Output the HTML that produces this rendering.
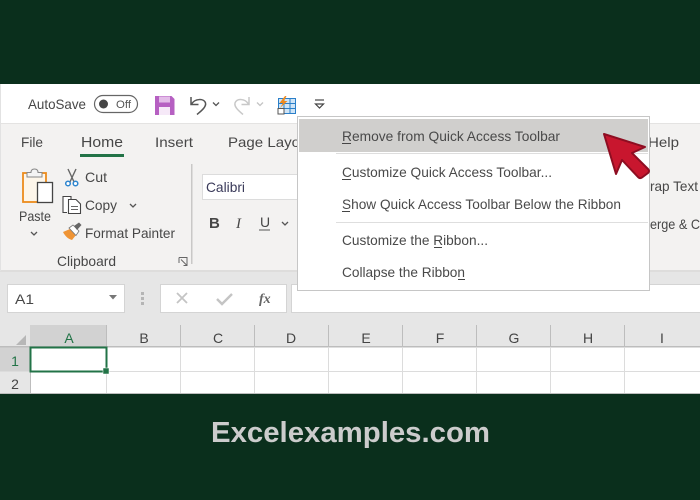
<!DOCTYPE html>
<html><head><meta charset="utf-8"><style>
html,body{margin:0;padding:0;background:#0a2f1c;width:700px;height:500px;overflow:hidden}
svg{display:block}
text{font-family:"Liberation Sans",sans-serif;fill:#474747;font-size:14px}
.m{font-size:14px;fill:#4a4a4a}
.h{font-size:14px;fill:#444;text-anchor:middle}
</style></head><body>
<svg width="700" height="500" viewBox="0 0 700 500" xmlns="http://www.w3.org/2000/svg">
<defs><filter id="s" x="0" y="0" width="100%" height="100%"><feGaussianBlur stdDeviation="0.3"/></filter></defs>
<rect width="700" height="500" fill="#0a2f1c"/>
<g filter="url(#s)">
<!-- title bar -->
<rect x="0" y="84" width="700" height="39" fill="#fff"/>
<!-- ribbon -->
<rect x="0" y="123" width="700" height="148" fill="#f3f2f1"/>
<rect x="0" y="123" width="700" height="1" fill="#e4e3e2"/>
<rect x="0" y="271" width="700" height="76" fill="#e6e6e6"/>
<rect x="0" y="270" width="700" height="2" fill="#dedddc"/>
<rect x="0" y="84" width="1" height="187" fill="#e2e2e2"/>

<text x="28" y="109" textLength="58" lengthAdjust="spacingAndGlyphs">AutoSave</text>
<rect x="94.500" y="95.500" width="43" height="17" rx="8.500" fill="#fff" stroke="#666" stroke-width="1.200"/>
<circle cx="103.500" cy="104" r="4.500" fill="#444"/>
<text x="116" y="108" textLength="15" lengthAdjust="spacingAndGlyphs" style="font-size:11px;fill:#555">Off</text>

<!-- save -->
<path d="M155 96H171.500L174.500 99V115H155Z" fill="#b660c2"/>
<rect x="159" y="96.500" width="11" height="6" fill="#e3bce8"/>
<rect x="159" y="107" width="11" height="8" fill="#f6e9f8"/>
<!-- undo -->
<path d="M191 97V104.500H198.500M191.500 104C195 98.500 204 98 205.500 103C206.500 107 201 111 197 114.500" fill="none" stroke="#555" stroke-width="1.500"/>
<path d="M213 102.500L216 105.500L219 102.500" fill="none" stroke="#555" stroke-width="1.300"/>
<!-- redo -->
<path d="M249 97V104.500H241.500M248.500 104C245 98.500 237 98 235 103C234 107 239 111 243 114.500" fill="none" stroke="#c8c8c8" stroke-width="1.500"/>
<path d="M257 102.500L260 105.500L263 102.500" fill="none" stroke="#c4c4c4" stroke-width="1.300"/>
<!-- quick table icon -->
<rect x="278.500" y="98.500" width="17" height="15" fill="#cfe4f6" stroke="#2a7fc9"/>
<path d="M284 98V114M290 98V114M278 103.500H296M278 108.500H296" stroke="#2a7fc9" stroke-width="1"/>
<rect x="278" y="108.500" width="6" height="5.500" fill="#fff" stroke="#555"/>
<path d="M285 96L279.500 103H283L280 108L287.500 101H284L286.500 96Z" fill="#f08a1d"/>
<!-- dropdown -->
<path d="M315 100H324" stroke="#444" stroke-width="1.200"/>
<path d="M315.500 104L319.500 108L323.500 104Z" fill="none" stroke="#444" stroke-width="1.200"/>

<!-- tabs -->
<text x="21" y="147" textLength="22" lengthAdjust="spacingAndGlyphs">File</text>
<text x="81" y="147" textLength="42" lengthAdjust="spacingAndGlyphs" style="font-size:14.500px">Home</text>
<rect x="80" y="154" width="44" height="3" fill="#217346"/>
<text x="155" y="147" textLength="38" lengthAdjust="spacingAndGlyphs">Insert</text>
<text x="228" y="147" textLength="72" lengthAdjust="spacingAndGlyphs">Page Layo</text>
<text x="648" y="147" textLength="31" lengthAdjust="spacingAndGlyphs">Help</text>

<!-- clipboard -->
<rect x="23" y="173" width="23" height="29" fill="#fdf6ea" stroke="#ec8c1c" stroke-width="1.800"/>
<path d="M27 177V172.500H31C31 170 32 169 34.500 169S38 170 38 172.500H42V177Z" fill="#f4f4f4" stroke="#888" stroke-width="1"/>
<rect x="37.500" y="182.500" width="15" height="20" fill="#fff" stroke="#444" stroke-width="1.300"/>
<text x="19" y="221" textLength="32" lengthAdjust="spacingAndGlyphs">Paste</text>
<path d="M31 232L34 235L37 232" fill="none" stroke="#555" stroke-width="1.300"/>
<!-- scissors -->
<path d="M68 169L75 184M76 169L69 184" stroke="#666" stroke-width="1.400" fill="none"/>
<circle cx="68" cy="183.500" r="2.300" fill="#fff" stroke="#2e86cf" stroke-width="1.500"/>
<circle cx="75.500" cy="183.500" r="2.300" fill="#fff" stroke="#2e86cf" stroke-width="1.500"/>
<text x="85" y="182" textLength="22" lengthAdjust="spacingAndGlyphs">Cut</text>
<!-- copy -->
<path d="M67 212.500H63V196.500H71V199" fill="#fff" stroke="#444" stroke-width="1.100"/>
<path d="M68.500 199.500H76L80.500 204V213.500H68.500Z" fill="#fff" stroke="#444" stroke-width="1.100"/>
<path d="M71 206.500H78M71 209.500H78" stroke="#666"/>
<text x="85" y="210" textLength="32" lengthAdjust="spacingAndGlyphs">Copy</text>
<path d="M130 204L133 207L136 204" fill="none" stroke="#555" stroke-width="1.300"/>
<!-- format painter -->
<path d="M63 232L70 229L76 235L72 240C68 239 65 236 63 232Z" fill="#ef9436"/>
<path d="M69 228L73 225L79 231L76 235.500Z" fill="#fff" stroke="#777" stroke-width="0.800"/>
<path d="M74 226L79 222.500L81.500 225L77 230Z" fill="#666"/>
<text x="85" y="238" textLength="90" lengthAdjust="spacingAndGlyphs">Format Painter</text>
<text x="57" y="266" textLength="59" lengthAdjust="spacingAndGlyphs">Clipboard</text>
<path d="M179 257.500H187V265.500M179 257.500V263M181 259.500L187 265.500M183.500 265.500H187V262" fill="none" stroke="#666"/>
<rect x="191" y="164" width="1.500" height="100" fill="#c9c8c7"/>

<!-- font -->
<rect x="202.500" y="174.500" width="100" height="25" fill="#fff" stroke="#dcdcdc"/>
<text x="206" y="192" textLength="39" lengthAdjust="spacingAndGlyphs" style="fill:#3a3a5a">Calibri</text>
<text x="209" y="228" style="font-size:15px;font-weight:bold">B</text>
<text x="236" y="228" style="font-size:15px;font-style:italic;font-family:'Liberation Serif',serif">I</text>
<text x="260" y="227" style="font-size:14px">U</text>
<rect x="259" y="229.500" width="11" height="1" fill="#555"/>
<path d="M282 222L285 225L288 222" fill="none" stroke="#555" stroke-width="1.300"/>

<!-- right ribbon bits -->
<text x="650" y="191" textLength="48" lengthAdjust="spacingAndGlyphs">rap Text</text>
<text x="650" y="229" textLength="50" lengthAdjust="spacingAndGlyphs">erge &amp; C</text>

<!-- formula bar -->
<rect x="7.500" y="284.500" width="117" height="28" fill="#fff" stroke="#d4d4d4"/>
<text x="15" y="304" textLength="19" lengthAdjust="spacingAndGlyphs">A1</text>
<path d="M109 295H117L113 299.500Z" fill="#777"/>
<g fill="#b5b5b5"><rect x="141" y="292" width="3" height="3"/><rect x="141" y="297" width="3" height="3"/><rect x="141" y="302" width="3" height="3"/></g>
<rect x="160.500" y="284.500" width="126" height="28" fill="#fff" stroke="#d4d4d4"/>
<rect x="291.500" y="284.500" width="409" height="28" fill="#fff" stroke="#d4d4d4"/>
<path d="M177 293L187 303M187 293L177 303" stroke="#c4c4c4" stroke-width="1.800"/>
<path d="M217 299L222 304L232 294" fill="none" stroke="#c4c4c4" stroke-width="2.400"/>
<text x="259" y="303" style="font-family:'Liberation Serif',serif;font-style:italic;font-weight:bold;font-size:14px;fill:#666">fx</text>

<!-- grid -->
<rect x="0" y="325" width="700" height="22" fill="#e6e6e6"/>
<rect x="30" y="325" width="77" height="22" fill="#d2d2d2"/>
<rect x="0" y="347" width="30" height="47" fill="#e6e6e6"/>
<rect x="0" y="347" width="30" height="24" fill="#d2d2d2"/>
<rect x="30" y="347" width="670" height="47" fill="#fff"/>
<path d="M26 335V345H16Z" fill="#b7b7b7"/>
<g fill="#bdbdbd">
<rect x="106" y="325" width="1" height="22"/><rect x="180" y="325" width="1" height="22"/><rect x="254" y="325" width="1" height="22"/><rect x="328" y="325" width="1" height="22"/><rect x="402" y="325" width="1" height="22"/><rect x="476" y="325" width="1" height="22"/><rect x="550" y="325" width="1" height="22"/><rect x="624" y="325" width="1" height="22"/>
<rect x="0" y="346" width="700" height="1.500"/>
<rect x="30" y="347" width="1" height="47"/>
<rect x="0" y="393" width="700" height="1"/>
</g>
<g fill="#dcdcdc">
<rect x="106" y="347" width="1" height="46"/><rect x="180" y="347" width="1" height="46"/><rect x="254" y="347" width="1" height="46"/><rect x="328" y="347" width="1" height="46"/><rect x="402" y="347" width="1" height="46"/><rect x="476" y="347" width="1" height="46"/><rect x="550" y="347" width="1" height="46"/><rect x="624" y="347" width="1" height="46"/>
<rect x="0" y="371" width="700" height="1"/>
</g>
<text class="h" x="69" y="343" style="fill:#217346">A</text>
<text class="h" x="144" y="343">B</text>
<text class="h" x="218" y="343">C</text>
<text class="h" x="291" y="343">D</text>
<text class="h" x="366" y="343">E</text>
<text class="h" x="440" y="343">F</text>
<text class="h" x="514" y="343">G</text>
<text class="h" x="588" y="343">H</text>
<text class="h" x="662" y="343">I</text>
<text class="h" x="15" y="366" style="fill:#217346">1</text>
<text class="h" x="15" y="389">2</text>
<rect x="30.500" y="347.500" width="76" height="24" fill="#fff" stroke="#217346" stroke-width="2"/>
<rect x="103" y="368" width="6" height="6" fill="#217346" stroke="#fff" stroke-width="0.500"/>

<!-- menu -->
<rect x="297.500" y="116.500" width="352" height="174" fill="#fff" stroke="#c6c6c6"/>
<rect x="299" y="119" width="349" height="33" fill="#d0cfcd"/>
<rect x="336" y="153" width="312" height="1" fill="#dedede"/>
<rect x="336" y="222" width="312" height="1" fill="#dedede"/>
<text class="m" x="342" y="141" textLength="218" lengthAdjust="spacingAndGlyphs">Remove from Quick Access Toolbar</text>
<text class="m" x="342" y="177" textLength="210" lengthAdjust="spacingAndGlyphs">Customize Quick Access Toolbar...</text>
<text class="m" x="342" y="209" textLength="279" lengthAdjust="spacingAndGlyphs">Show Quick Access Toolbar Below the Ribbon</text>
<text class="m" x="342" y="245" textLength="146" lengthAdjust="spacingAndGlyphs">Customize the Ribbon...</text>
<text class="m" x="342" y="277" textLength="123" lengthAdjust="spacingAndGlyphs">Collapse the Ribbon</text>
<g fill="#444">
<rect x="342" y="143" width="9" height="1"/>
<rect x="342" y="179" width="9" height="1"/>
<rect x="342" y="211" width="8" height="1"/>
<rect x="434" y="247" width="8" height="1"/>
<rect x="458" y="279" width="7" height="1"/>
</g>

<!-- arrow -->
<path d="M604 134L645 147L632 153L648 169Q650 171 648 173L642 177.500Q640 179 638 177L622 160L616 174Z" fill="#c8192e" stroke="#8e1022" stroke-width="2" stroke-linejoin="round"/>

<!-- footer -->
<text x="350.500" y="442" text-anchor="middle" textLength="279" lengthAdjust="spacingAndGlyphs" style="font-size:29px;font-weight:bold;fill:#cccccc">Excelexamples.com</text>
</g>
</svg>
</body></html>
